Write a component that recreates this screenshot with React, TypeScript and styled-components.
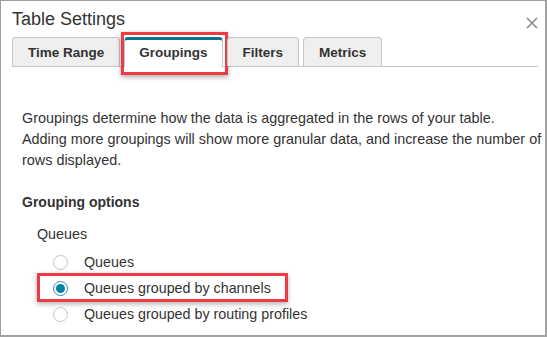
import React, { useState } from 'react';
import styled, { createGlobalStyle } from 'styled-components';

const GlobalStyle = createGlobalStyle`
  html, body {
    margin: 0;
    padding: 0;
    background: #ffffff;
  }
  body {
    font-family: 'Liberation Sans', Arial, sans-serif;
    color: #333;
  }
`;

const tabs = ['Time Range', 'Groupings', 'Filters', 'Metrics'];

const options = [
  { id: 'queues', label: 'Queues' },
  { id: 'channels', label: 'Queues grouped by channels' },
  { id: 'routing', label: 'Queues grouped by routing profiles' },
];

const App: React.FC = () => {
  const [activeTab, setActiveTab] = useState('Groupings');
  const [grouping, setGrouping] = useState('channels');

  return (
    <>
      <GlobalStyle />
      <Dialog>
        <Header>
          <Title>Table Settings</Title>
          <CloseButton aria-label="Close">
            <svg width="12" height="12" viewBox="0 0 12 12">
              <path d="M1 1 L11 11 M11 1 L1 11" stroke="#8a8a8a" strokeWidth="1.6" fill="none" />
            </svg>
          </CloseButton>
        </Header>

        <TabList>
          {tabs.map(t => (
            <Tab key={t} active={t === activeTab} highlighted={t === 'Groupings'} onClick={() => setActiveTab(t)}>
              {t}
            </Tab>
          ))}
        </TabList>

        <Body>
          <Description>
            Groupings determine how the data is aggregated in the rows of your table.
            <br />
            Adding more groupings will show more granular data, and increase the number of rows displayed.
          </Description>

          <SectionTitle>Grouping options</SectionTitle>
          <GroupLabel>Queues</GroupLabel>

          <RadioList>
            {options.map(o => (
              <RadioRow key={o.id} highlighted={o.id === 'channels'} onClick={() => setGrouping(o.id)}>
                <RadioCircle checked={grouping === o.id} />
                <RadioText>{o.label}</RadioText>
              </RadioRow>
            ))}
          </RadioList>
        </Body>
      </Dialog>
    </>
  );
};

export default App;

const Dialog = styled.div`
  width: 547px;
  height: 337px;
  box-sizing: border-box;
  border-top: 1px solid #9f9f9f;
  border-left: 1px solid #9f9f9f;
  border-right: 2px solid #a3a3a3;
  border-bottom: 2px solid #a3a3a3;
  background: #fff;
  overflow: hidden;
`;

const Header = styled.div`
  display: flex;
  justify-content: space-between;
  align-items: flex-start;
  padding: 7px 7px 0 11px;
  height: 29px;
  box-sizing: border-box;
`;

const Title = styled.h1`
  margin: 0;
  font-size: 18px;
  font-weight: 400;
  line-height: 22px;
  color: #333;
`;

const CloseButton = styled.button`
  border: none;
  background: none;
  padding: 0;
  margin-top: 9px;
  width: 12px;
  height: 12px;
  cursor: pointer;
  display: flex;
`;

const TabList = styled.div`
  display: flex;
  gap: 4px;
  margin: 7px 7px 0 11px;
  border-bottom: 1px solid #c6c6c6;
  height: 29px;
  align-items: flex-end;
`;

const Tab = styled.div<{ active?: boolean; highlighted?: boolean }>`
  position: relative;
  box-sizing: border-box;
  height: ${({ active }) => (active ? '30px' : '29px')};
  margin-bottom: ${({ active }) => (active ? '-1px' : '0')};
  padding: ${({ active }) => (active ? '0 14px 3px' : '0 15px')};
  display: flex;
  align-items: center;
  font-size: 13.5px;
  font-weight: 700;
  color: #333;
  background: ${({ active }) => (active ? '#fff' : '#efefef')};
  border: 1px solid #c6c6c6;
  border-top: ${({ active }) => (active ? '3px solid #00778f' : '1px solid #c6c6c6')};
  border-bottom: none;
  border-radius: 4px 4px 0 0;
  cursor: pointer;

  &::after {
    content: '';
    display: ${({ highlighted }) => (highlighted ? 'block' : 'none')};
    position: absolute;
    top: -8px;
    left: -4px;
    right: -6px;
    bottom: -8px;
    border: 3px solid #ef3a44;
    box-shadow: 0 2px 5px rgba(0, 0, 0, 0.35);
    pointer-events: none;
  }
`;

const Body = styled.div`
  padding: 0 0 0 21px;
`;

const Description = styled.p`
  margin: 41px 0 0;
  font-size: 14.4px;
  line-height: 21px;
  color: #333;
`;

const SectionTitle = styled.div`
  margin-top: 21px;
  font-size: 14px;
  line-height: 21px;
  font-weight: 700;
  color: #333;
`;

const GroupLabel = styled.div`
  margin-top: 11px;
  padding-left: 15px;
  font-size: 14.3px;
  line-height: 21px;
  color: #333;
`;

const RadioList = styled.div`
  display: flex;
  flex-direction: column;
  margin-top: 4px;
`;

const RadioRow = styled.label<{ highlighted?: boolean }>`
  position: relative;
  display: flex;
  align-items: center;
  height: 26px;
  padding-left: 31px;
  cursor: pointer;

  &::after {
    content: '';
    display: ${({ highlighted }) => (highlighted ? 'block' : 'none')};
    position: absolute;
    top: -2px;
    bottom: -1px;
    left: 15px;
    width: 251px;
    border: 3px solid #ef3a44;
    box-sizing: border-box;
    box-shadow: 0 2px 5px rgba(0, 0, 0, 0.3);
    pointer-events: none;
  }
`;

const RadioCircle = styled.span<{ checked?: boolean }>`
  position: relative;
  width: 15px;
  height: 15px;
  box-sizing: border-box;
  border-radius: 50%;
  border: 1px solid ${({ checked }) => (checked ? '#2f86d6' : '#c4c4c4')};
  background: #fff;
  flex-shrink: 0;

  &::after {
    content: '';
    display: ${({ checked }) => (checked ? 'block' : 'none')};
    position: absolute;
    top: 2px;
    left: 2px;
    width: 9px;
    height: 9px;
    border-radius: 50%;
    background: #00849f;
  }
`;

const RadioText = styled.span`
  margin-left: 16px;
  font-size: 14.3px;
  color: #333;
`;
